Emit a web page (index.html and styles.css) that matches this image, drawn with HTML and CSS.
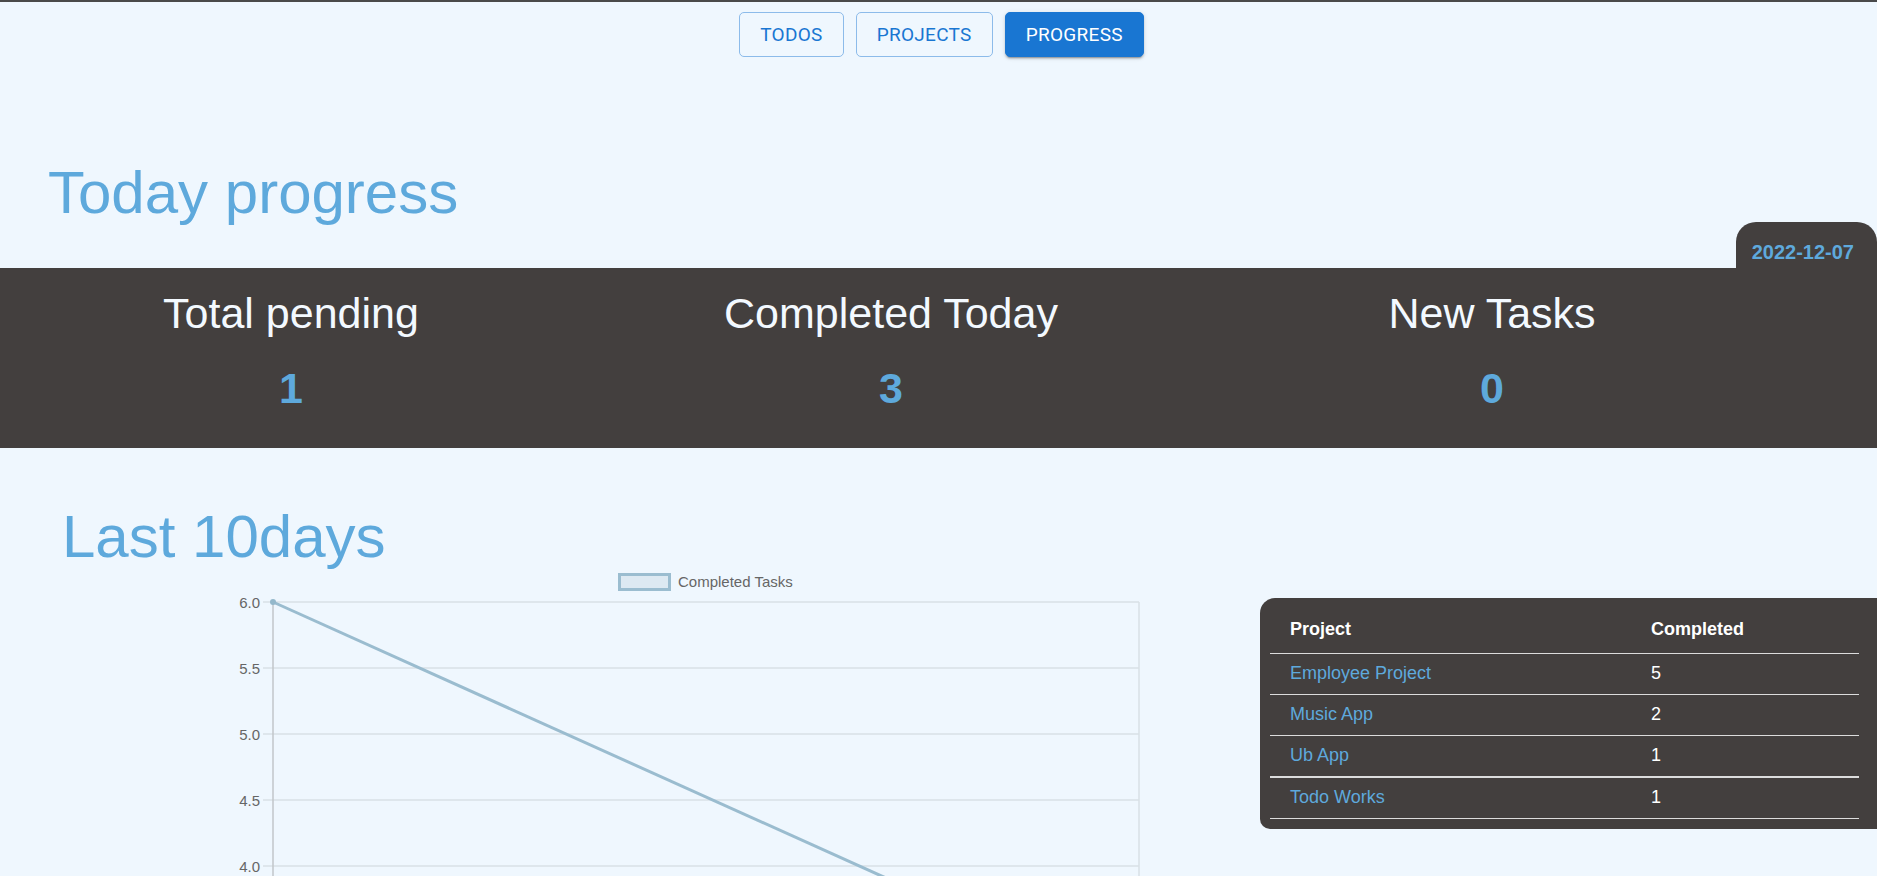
FILE: index.html
```html
<!DOCTYPE html>
<html lang="en">
<head>
<meta charset="utf-8">
<title>Progress</title>
<link rel="stylesheet" href="styles.css">
</head>
<body>
  <nav class="nav">
    <button class="btn btn-outline">TODOS</button>
    <button class="btn btn-outline">PROJECTS</button>
    <button class="btn btn-filled">PROGRESS</button>
  </nav>

  <h1 class="title title-today">Today progress</h1>

  <section class="band">
    <div class="date-tab">2022-12-07</div>
    <div class="stat stat-1">
      <div class="stat-label">Total pending</div>
      <div class="stat-value">1</div>
    </div>
    <div class="stat stat-2">
      <div class="stat-label">Completed Today</div>
      <div class="stat-value">3</div>
    </div>
    <div class="stat stat-3">
      <div class="stat-label">New Tasks</div>
      <div class="stat-value">0</div>
    </div>
  </section>

  <h1 class="title title-last">Last 10days</h1>

  <section class="chart-row">
    <svg class="chart" width="960" height="400" viewBox="0 0 960 400">
      <rect x="419.5" y="3.5" width="50" height="15" fill="#dde9f2" stroke="#9bbdd0" stroke-width="3"/>
      <text x="478" y="15.5" class="legend-text">Completed Tasks</text>
      <g class="grid">
        <line x1="63" y1="31" x2="939" y2="31"/>
        <line x1="63" y1="97" x2="939" y2="97"/>
        <line x1="63" y1="163" x2="939" y2="163"/>
        <line x1="63" y1="229" x2="939" y2="229"/>
        <line x1="63" y1="295" x2="939" y2="295"/>
        <line x1="63" y1="361" x2="939" y2="361"/>
        <line x1="939" y1="31" x2="939" y2="400"/>
      </g>
      <line x1="73" y1="31" x2="73" y2="400" class="axis"/>
      <g class="ticks">
        <text x="60" y="36.5">6.0</text>
        <text x="60" y="102.5">5.5</text>
        <text x="60" y="168.5">5.0</text>
        <text x="60" y="234.5">4.5</text>
        <text x="60" y="300.5">4.0</text>
        <text x="60" y="366.5">3.5</text>
      </g>
      <line x1="73" y1="31" x2="939" y2="421" class="series"/>
      <circle cx="73" cy="31" r="3" fill="#94b8cb"/>
    </svg>

    <div class="table-box">
      <table class="proj-table">
        <colgroup><col class="col-a"><col class="col-b"></colgroup>
        <thead>
          <tr><th>Project</th><th>Completed</th></tr>
        </thead>
        <tbody>
          <tr><td class="name">Employee Project</td><td>5</td></tr>
          <tr><td class="name">Music App</td><td>2</td></tr>
          <tr class="thick"><td class="name">Ub App</td><td>1</td></tr>
          <tr><td class="name">Todo Works</td><td>1</td></tr>
        </tbody>
      </table>
    </div>
  </section>
</body>
</html>
```

FILE: styles.css
```css
html, body {
  margin: 0;
  padding: 0;
}
body {
  background: #eff7fe;
  border-top: 2px solid #4a4a4a;
  font-family: "Liberation Sans", Arial, sans-serif;
  overflow: hidden;
}

.nav {
  display: flex;
  justify-content: center;
  gap: 12px;
  padding: 10px 0 0 6px;
}
.btn {
  font-family: Roboto, "Liberation Sans", sans-serif;
  font-size: 19px;
  font-weight: 400;
  letter-spacing: 0.3px;
  height: 45px;
  padding: 0 20px;
  border-radius: 5px;
  box-sizing: border-box;
  cursor: pointer;
}
.btn-outline {
  background: transparent;
  color: #1976d2;
  border: 1px solid #8cbbea;
}
.btn-filled {
  background: #1976d2;
  color: #fff;
  border: 1px solid #1976d2;
  box-shadow: 0 3px 1px -2px rgba(0,0,0,0.2), 0 2px 2px 0 rgba(0,0,0,0.14), 0 1px 5px 0 rgba(0,0,0,0.12);
}

.title {
  color: #5ea9dc;
  font-weight: 400;
  font-size: 60px;
  line-height: 68px;
  margin: 0;
}
.title-today {
  margin: 102px 0 41px 48px;
}
.title-last {
  margin: 55px 0 0 62px;
}

.band {
  position: relative;
  background: #433f3e;
  height: 180px;
  box-sizing: border-box;
  padding-top: 21px;
  display: grid;
  grid-template-columns: 582px 618px 584px;
  align-items: start;
}
.date-tab {
  position: absolute;
  right: 0;
  top: -46px;
  height: 46px;
  box-sizing: border-box;
  padding: 19px 23px 0 16px;
  background: #433f3e;
  border-radius: 20px 20px 0 0;
  color: #5ea9dc;
  font-weight: 700;
  font-size: 20px;
  line-height: 23px;
}
.stat {
  text-align: center;
}
.stat-label {
  color: #f3f9ff;
  font-size: 43px;
  line-height: 48px;
}
.stat-value {
  color: #5ea9dc;
  font-size: 43px;
  font-weight: 700;
  line-height: 48px;
  margin-top: 27px;
}

.chart-row {
  display: flex;
  align-items: flex-start;
  width: 1877px;
  overflow: hidden;
}
.chart {
  flex-shrink: 0;
  margin-left: 200px;
  display: block;
}
.legend-text {
  font-family: "Liberation Sans", Arial, sans-serif;
  font-size: 15px;
  fill: #666;
}
.grid line {
  stroke: #d9e0e6;
  stroke-width: 1.5;
}
.axis {
  stroke: #c2c6ca;
  stroke-width: 1.5;
}
.ticks text {
  font-family: "Liberation Sans", Arial, sans-serif;
  font-size: 15px;
  fill: #666;
  text-anchor: end;
}
.series {
  stroke: #9abccf;
  stroke-width: 3;
  fill: none;
}

.table-box {
  flex-shrink: 0;
  margin-left: 100px;
  margin-top: 27px;
  width: 627px;
  box-sizing: border-box;
  padding: 10px 28px 10px 10px;
  background: #433f3e;
  border-radius: 15px 0 0 10px;
}
.proj-table {
  width: 589px;
  border-collapse: collapse;
  table-layout: fixed;
  font-size: 18px;
  line-height: 21px;
}
.col-a { width: 361px; }
.col-b { width: 228px; }
.proj-table th {
  text-align: left;
  color: #fff;
  font-weight: 700;
  padding: 11px 20px 13px;
  border-bottom: 1px solid #dcdcdc;
}
.proj-table td {
  color: #fff;
  padding: 9px 20px 10px;
  border-bottom: 1px solid #dcdcdc;
}
.proj-table tr.thick td {
  border-bottom-width: 2px;
}
.proj-table td.name {
  color: #5ea9dc;
}
```
